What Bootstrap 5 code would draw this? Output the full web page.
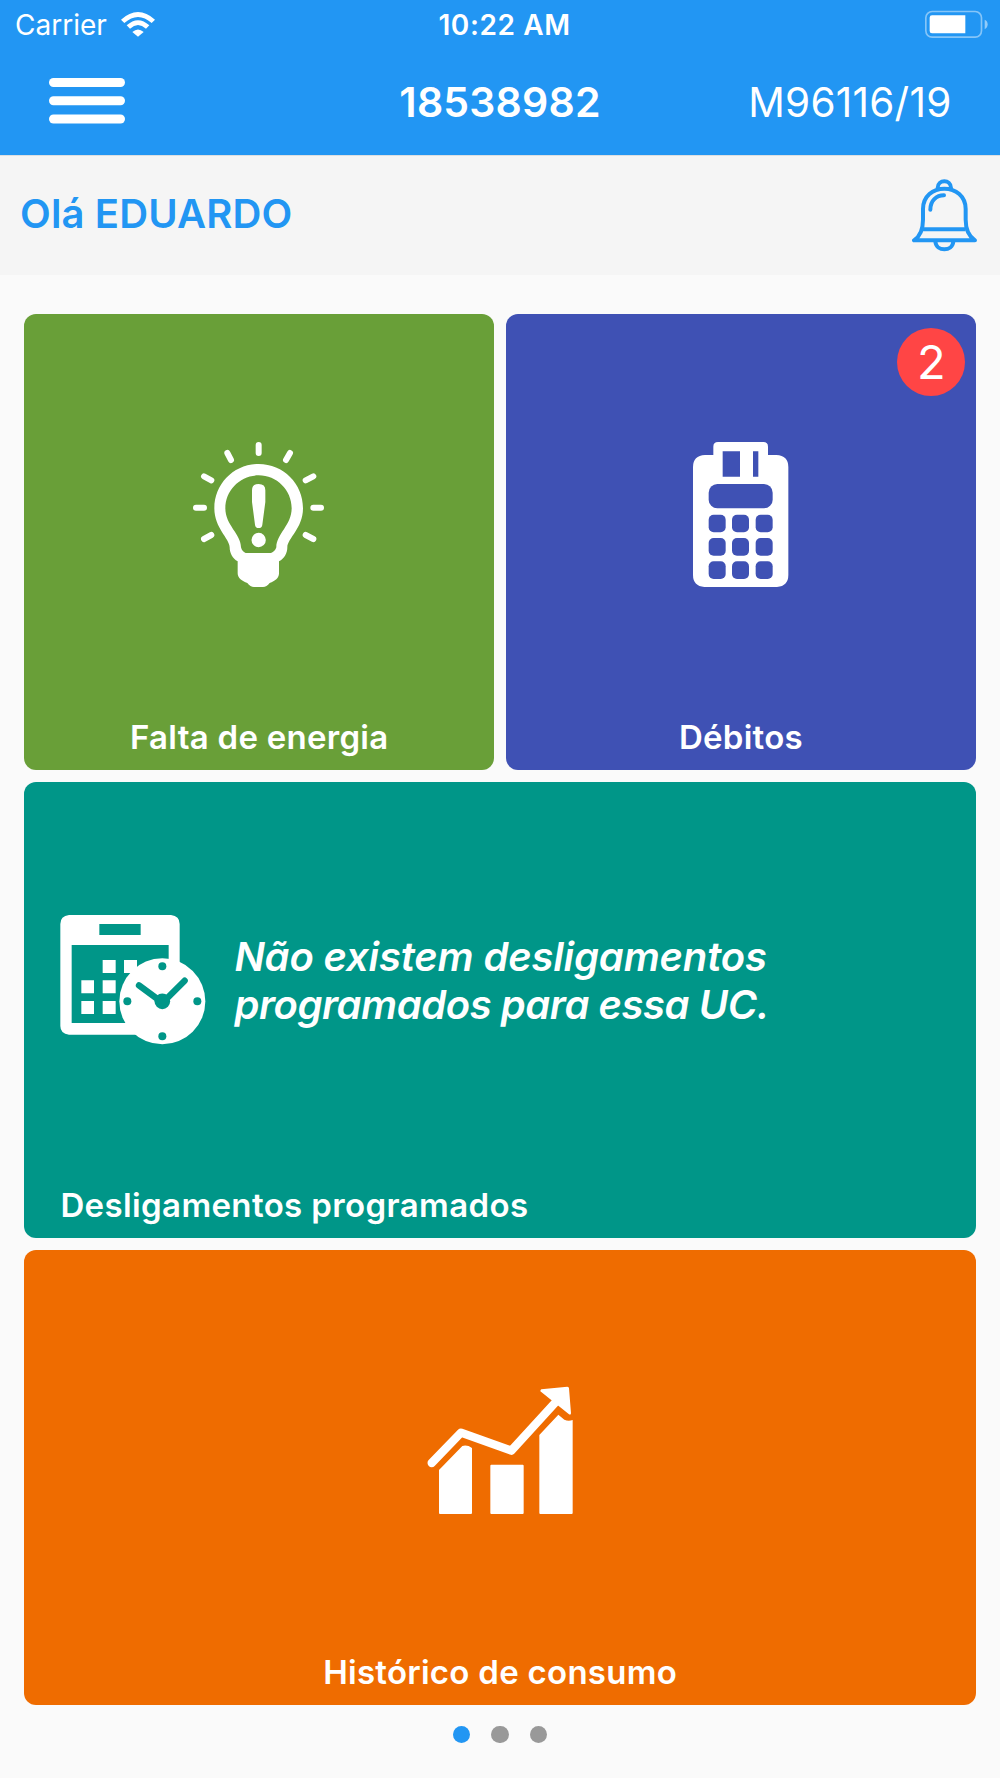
<!DOCTYPE html>
<html lang="pt-BR">
<head>
<meta charset="utf-8">
<meta name="viewport" content="width=device-width, initial-scale=1">
<title>Início</title>
<link href="https://cdn.jsdelivr.net/npm/bootstrap@5.3.0/dist/css/bootstrap.min.css" rel="stylesheet">
<style>
body{font-family:Inter,"Liberation Sans",sans-serif;background:#fafafa;height:1778px;overflow:hidden;line-height:1.2}
svg{display:block;flex:none}
.topbar{background:#2296f3;height:155px;color:#fff}
.status{height:48px;padding:0 12px 0 15px;font-size:28px}
.side{flex:1 1 0}
.carrier{font-weight:400;letter-spacing:0;margin-right:14px;padding-top:4px}
.clock{font-weight:600;font-size:28px;letter-spacing:.6px;padding:4px 0 0 6px}
.titlebar{height:107px;padding:0 48.5px}
.menu-btn{padding:4px 0 0;border:0;background:none}
.account{font-size:41px;font-weight:600;letter-spacing:.2px;padding-top:2px}
.meter{display:inline-block;font-size:40.5px;font-weight:400;letter-spacing:.25px;padding-top:3px}
.greeting{background:#f5f5f5;height:120px;border-top:1px solid #dcdfe2;padding:0 23px 0 20px;color:#2296f3}
.hello{font-size:40px;font-weight:600;letter-spacing:.15px;padding-bottom:3px}
.tiles{padding:39px 24.2px 0 24.4px;gap:12px}
.tile-row{gap:12px}
.tile{height:455.8px;border-radius:12px;color:#fff;padding-bottom:13px}
.outage{background:#699f38}
.debts{background:#3f51b4}
.shutdown{background:#009688}
.usage{background:#ef6c00}
.tile-art{flex:1 1 0}
.shutdown .tile-art{padding-bottom:6px}
.tile-label{font-size:33px;font-weight:600;line-height:40px;letter-spacing:.27px;white-space:nowrap}
.shutdown .tile-label{letter-spacing:.38px}
.count{width:68px;height:68px;top:14.2px;right:10.5px;background:#ff4545;font-size:47px;font-weight:400}
.notice{font-size:40px;font-weight:600;font-style:italic;line-height:48px;letter-spacing:-.45px;white-space:nowrap;padding-top:2px}
.notice span{letter-spacing:-.15px}
.pager{gap:21.5px;padding-top:20.5px}
.pager span{width:17.2px;height:17.2px;background:#999}
.pager .current{background:#2296f3}
</style>
</head>
<body>
<header class="topbar">
  <div class="status d-flex align-items-center">
    <div class="side d-flex align-items-center">
      <span class="carrier">Carrier</span>
      <svg width="34" height="25" viewBox="0 0 102 75"><g fill="#fff"><path d="M0 23Q51-23 102 23L92 33Q51-3 10 33Z"/><path d="M17 40Q51 9 85 40L75 50Q51 28 27 50Z"/><path d="M34 60Q51 45 68 60L51 74Z"/></g></svg>
    </div>
    <span class="clock">10:22 AM</span>
    <div class="side d-flex justify-content-end">
      <svg width="63" height="28" viewBox="0 0 189 84"><rect x="2.5" y="4.5" width="167" height="77" rx="19" fill="none" stroke="#fff" stroke-opacity=".45" stroke-width="5"/><path d="M21 16H121V70H21Q14 70 14 63V23Q14 16 21 16Z" fill="#fff"/><path d="M179 29Q188 33 188 43Q188 53 179 58Z" fill="#fff" fill-opacity=".5"/></svg>
    </div>
  </div>
  <nav class="titlebar d-flex align-items-center">
    <div class="side">
      <button class="menu-btn" type="button" aria-label="Menu"><svg width="76" height="46" viewBox="0 0 76 46"><g fill="#fff"><rect width="76" height="9" rx="4.5"/><rect y="18.3" width="76" height="9" rx="4.5"/><rect y="36.5" width="76" height="9" rx="4.5"/></g></svg></button>
    </div>
    <span class="account">18538982</span>
    <div class="side text-end"><span class="meter">M96116/19</span></div>
  </nav>
</header>
<section class="greeting d-flex align-items-center justify-content-between">
  <span class="hello">Olá EDUARDO</span>
  <svg width="65" height="73" viewBox="0 0 195 219"><g fill="none" stroke="#2296f3" stroke-width="12" stroke-linecap="round" stroke-linejoin="round"><path d="M77 27C77 0 117 0 117 27"/><path d="M6 184H189C174 174 161 158 161 122V90C161 52 131 29 97 29S33 52 33 90V122C33 158 21 174 6 184Z"/><path d="M33 151H161" stroke-linecap="butt"/><path d="M55 92C55 65 73 49 96 49"/><path d="M70 187C73 219 121 219 124 187"/></g></svg>
</section>
<main class="tiles d-flex flex-column">
  <div class="tile-row d-flex">
    <section class="tile outage w-50 d-flex flex-column align-items-center">
      <div class="tile-art d-flex align-items-center pb-1">
        <svg width="132" height="148" viewBox="39 27 396 444"><g fill="none" stroke="#fff" stroke-width="18" stroke-linecap="round"><path d="M236 45V69M142 69L153 90M330 69L318 90M72 139L94 151M400 139L377 151M48 233H72M400 233H423M72 327L94 315M400 327L377 315"/></g><path fill="#fff" fill-rule="evenodd" d="M236 102C162 102 103 161 103 235C103 295 149 326 149 352C149 370 158 386 173 394V430C173 444 186 454 202 459Q211 471 222 471H249Q260 471 269 459C285 454 297 444 297 430V394C313 386 322 370 322 352C322 326 369 295 369 235C369 161 310 102 236 102ZM236 136C290 136 335 180 335 235C335 286 289 312 289 352Q285 365 273 369H197Q186 365 183 352C183 312 136 286 136 235C136 180 181 136 236 136Z"/><path fill="#fff" d="M216 181Q216 162 236 162T256 181V216L247 284Q246 294 236 294T225 284L216 216Z"/><circle cx="236" cy="330" r="21.500" fill="#fff"/></svg>
      </div>
      <div class="tile-label">Falta de energia</div>
    </section>
    <section class="tile debts w-50 d-flex flex-column align-items-center position-relative">
      <div class="tile-art d-flex align-items-center pb-1">
        <svg width="96" height="148" viewBox="38 27 288 444"><path fill="#fff" d="M99 50Q99 36 113 36H249Q263 36 263 50V75H288Q324 77 324 111V435Q324 468 290 471H72Q38 468 38 435V111Q38 77 74 75H99Z"/><g fill="#3f51b4"><path d="M127 64H179V140H127ZM218 64H234V140H218Z"/><rect x="85" y="162" width="192" height="73" rx="26"/><rect x="85" y="254" width="51" height="53" rx="15"/><rect x="155" y="254" width="51" height="53" rx="15"/><rect x="226" y="254" width="51" height="53" rx="15"/><rect x="85" y="324" width="51" height="53" rx="15"/><rect x="155" y="324" width="51" height="53" rx="15"/><rect x="226" y="324" width="51" height="53" rx="15"/><rect x="85" y="394" width="51" height="53" rx="15"/><rect x="155" y="394" width="51" height="53" rx="15"/><rect x="226" y="394" width="51" height="53" rx="15"/></g></svg>
      </div>
      <div class="tile-label">Débitos</div>
      <span class="count position-absolute rounded-circle d-flex align-items-center justify-content-center">2</span>
    </section>
  </div>
  <section class="tile shutdown d-flex flex-column ps-4">
    <div class="tile-art d-flex align-items-center ps-2">
      <svg class="ms-1" width="146" height="130" viewBox="60 45 438 390"><path fill="#fff" fill-rule="evenodd" d="M87 45H393Q419 48 419 72V404H87Q61 401 61 378V72Q61 48 87 45ZM178 72V105H302V72ZM95 135V369H386V135Z"/><path fill="#fff" d="M188 180H227V219H188ZM252 180H291V219H252ZM124 241H162V280H124ZM188 241H227V280H188ZM124 303H162V342H124ZM188 303H227V342H188Z"/><path fill="#009688" d="M386 304H425V410H386Z"/><circle cx="367" cy="304" r="129" fill="#fff"/><g fill="#009688"><circle cx="367" cy="199" r="12"/><circle cx="472" cy="304" r="12"/><circle cx="367" cy="409" r="12"/><circle cx="262" cy="304" r="12"/><circle cx="367" cy="304" r="23.500"/></g><path d="M297 256L358 301M434 242L373 303" stroke="#009688" stroke-width="19" stroke-linecap="round"/></svg>
      <div class="notice ms-4 ps-1"><span>Não existem desligamentos</span><br>programados para essa UC.</div>
    </div>
    <div class="tile-label ps-2 ms-1">Desligamentos programados</div>
  </section>
  <section class="tile usage d-flex flex-column align-items-center">
    <div class="tile-art d-flex align-items-center">
      <svg width="146" height="130" viewBox="51 47 438 390"><path d="M65 278L153 187L304 241L440 92" fill="none" stroke="#fff" stroke-width="25" stroke-linecap="round" stroke-linejoin="round"/><path fill="#fff" d="M394 57L472 49Q477 49 477 54L483 129Q482 136 477 132L391 63Q391 58 394 57ZM87 299L157 227Q172 223 186 233V428Q186 431 183 431H90Q87 431 87 428ZM244 283H338Q341 283 341 286V428Q341 431 338 431H244Q241 431 241 428V286Q241 283 244 283ZM388 194L445 133L463 148Q475 154 488 149V428Q488 431 485 431H391Q388 431 388 428Z"/></svg>
    </div>
    <div class="tile-label">Histórico de consumo</div>
  </section>
</main>
<div class="pager d-flex justify-content-center"><span class="current rounded-circle"></span><span class="rounded-circle"></span><span class="rounded-circle"></span></div>
<script src="https://cdn.jsdelivr.net/npm/bootstrap@5.3.0/dist/js/bootstrap.bundle.min.js"></script>
</body>
</html>
